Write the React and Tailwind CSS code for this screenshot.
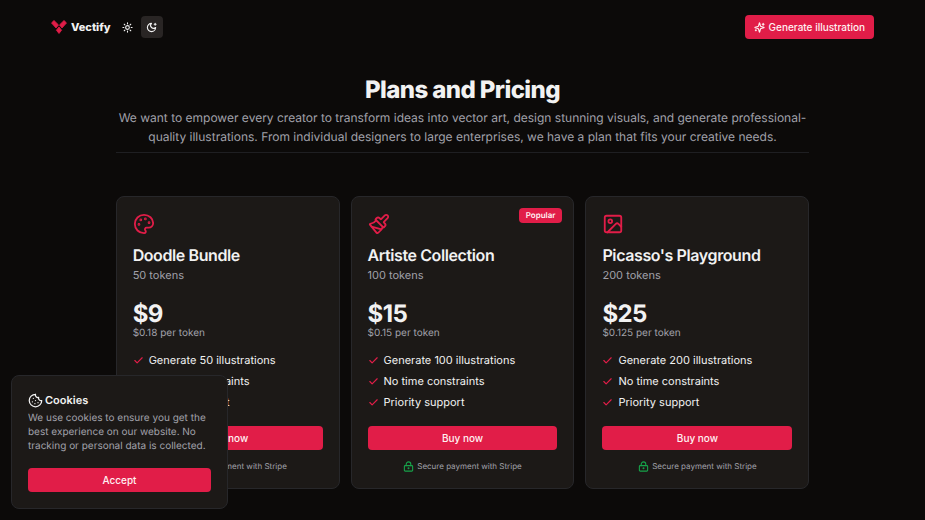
import React from "react";
import { Palette, Paintbrush, Image, LockKeyhole, Cookie, Check, Sun } from "lucide-react";

const plans = [
  { name: "Doodle Bundle", tokens: 50, price: "$9", rate: "$0.18", Icon: Palette },
  { name: "Artiste Collection", tokens: 100, price: "$15", rate: "$0.15", Icon: Paintbrush, popular: true },
  { name: "Picasso's Playground", tokens: 200, price: "$25", rate: "$0.125", Icon: Image },
];

const primary =
  "flex h-6 items-center justify-center rounded bg-[#e11d48] text-[10px] font-medium text-[#fff1f2]";

function Logo() {
  return (
    <svg viewBox="0 0 16 14" className="h-[14px] w-4" fill="#e11d48" stroke="#e11d48" strokeWidth="0.8" strokeLinejoin="round" aria-hidden="true">
      <path d="M3 0.5 7.5 4.9 5 8 0.5 2.9Z" />
      <path d="M13 0.5 8.5 4.9 11 8 15.5 2.9Z" />
      <path d="M8 6.9 10.6 10.2 8 13.5 5.4 10.2Z" />
    </svg>
  );
}

function LineIcon({ children }) {
  return (
    <svg viewBox="0 0 24 24" className="size-[11px]" fill="none" stroke="currentColor" strokeWidth="2.4" strokeLinecap="round" strokeLinejoin="round" aria-hidden="true">
      {children}
    </svg>
  );
}

function MoonStar() {
  return (
    <LineIcon>
      <path d="M12 3a6 6 0 0 0 9 9 9 9 0 1 1-9-9" />
      <path d="M20 3v4" />
      <path d="M22 5h-4" />
    </LineIcon>
  );
}

function Sparkles() {
  return (
    <LineIcon>
      <path d="M9.937 15.5A2 2 0 0 0 8.5 14.063l-6.135-1.582a.5.5 0 0 1 0-.962L8.5 9.936A2 2 0 0 0 9.937 8.5l1.582-6.135a.5.5 0 0 1 .963 0L14.063 8.5A2 2 0 0 0 15.5 9.937l6.135 1.581a.5.5 0 0 1 0 .964L15.5 14.063a2 2 0 0 0-1.437 1.437l-1.582 6.135a.5.5 0 0 1-.963 0z" />
      <path d="M20 3v4" />
      <path d="M22 5h-4" />
      <path d="M4 17v2" />
      <path d="M5 18H3" />
    </LineIcon>
  );
}

function PlanCard({ plan }) {
  const { name, tokens, price, rate, Icon, popular } = plan;
  const features = [`Generate ${tokens} illustrations`, "No time constraints", "Priority support"];
  return (
    <article className="relative rounded-lg border border-[#27272a] bg-[#1c1917] p-4">
      {popular && (
        <span className="absolute top-[11px] right-[11px] rounded bg-[#e11d48] px-[7px] text-[8px] leading-[15px] font-semibold text-[#fff1f2]">
          Popular
        </span>
      )}
      <Icon className="size-[22px] text-[#e11d48]" strokeWidth={2} aria-hidden="true" />
      <h2 className="mt-[9px] text-base leading-[23px] font-semibold tracking-tight">{name}</h2>
      <p className="text-[11px] leading-4 text-[#a1a1aa]">{tokens} tokens</p>
      <p className="mt-[18px] text-2xl leading-[26px] font-bold tracking-tight">{price}</p>
      <p className="text-[10px] leading-[13px] text-[#a1a1aa]">{rate} per token</p>
      <ul className="mt-3 flex flex-col gap-[5px]">
        {features.map((f) => (
          <li key={f} className="flex items-center gap-[5px] text-[11px] leading-4">
            <Check className="size-[11px] text-[#e11d48]" strokeWidth={2.5} aria-hidden="true" />
            {f}
          </li>
        ))}
      </ul>
      <button type="button" className={`${primary} mt-4 w-full`}>Buy now</button>
      <p className="mt-[11px] flex items-center justify-center gap-[3px] text-[8px] leading-[11px] text-[#a1a1aa]">
        <LockKeyhole className="size-[11px] text-[#16a34a]" strokeWidth={2.4} aria-hidden="true" />
        Secure payment with Stripe
      </p>
    </article>
  );
}

export default function App() {
  return (
    <div className="min-h-screen bg-[#0c0a09] font-['Inter',sans-serif] text-[#f2f2f2] [text-rendering:geometricPrecision]">
      <header className="flex items-center justify-between px-[51px] py-[15px]">
        <div className="flex items-center">
          <a href="#" className="flex items-center gap-1 text-[11px] font-extrabold">
            <Logo />
            Vectify
          </a>
          <div className="ml-[6px] flex gap-[2px]">
            <button type="button" aria-label="Light mode" className="flex size-[22px] items-center justify-center rounded">
              <Sun className="size-[11px]" strokeWidth={2.4} />
            </button>
            <button type="button" aria-label="Dark mode" className="flex size-[22px] items-center justify-center rounded bg-[#292524]">
              <MoonStar />
            </button>
          </div>
        </div>
        <button type="button" className={`${primary} gap-1 px-[9px]`}>
          <Sparkles />
          Generate illustration
        </button>
      </header>

      <main className="mx-auto w-3/4 pt-[18px] pb-8">
        <div className="border-b border-[#1f1f22] pb-[6px] text-center">
          <h1 className="mb-px text-2xl leading-[35px] font-extrabold tracking-tight">Plans and Pricing</h1>
          <p className="text-xs leading-[19px] text-[#a1a1aa]">
            We want to empower every creator to transform ideas into vector art, design stunning visuals, and generate
            professional-quality illustrations. From individual designers to large enterprises, we have a plan that fits
            your creative needs.
          </p>
        </div>
        <section className="mt-[43px] grid grid-cols-3 gap-[11px]" aria-label="Plans">
          {plans.map((p) => (
            <PlanCard key={p.name} plan={p} />
          ))}
        </section>
      </main>

      <aside className="fixed bottom-[11px] left-[11px] w-[217px] rounded-lg border border-[#27272a] bg-[#1c1917] p-4">
        <h2 className="flex items-center gap-[2px] text-[11px] leading-4 font-semibold">
          <Cookie className="size-[15px]" aria-hidden="true" />
          Cookies
        </h2>
        <p className="mt-[3px] text-[10px] leading-[14px] text-[#a1a1aa]">
          We use cookies to ensure you get the best experience on our website. No tracking or personal data is collected.
        </p>
        <button type="button" className={`${primary} mt-[15px] w-full`}>Accept</button>
      </aside>
    </div>
  );
}
